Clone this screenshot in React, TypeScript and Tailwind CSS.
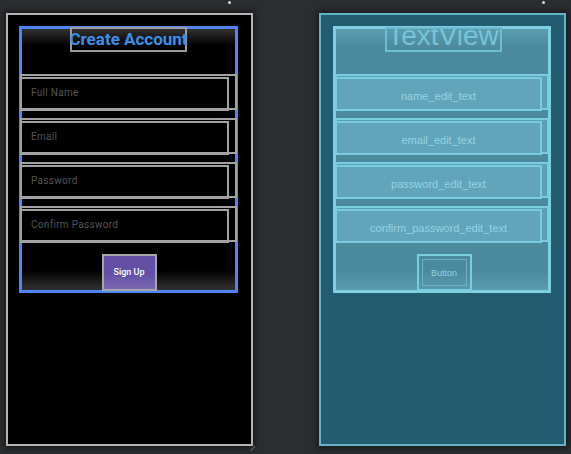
import React from 'react';

const fields = ['Full Name', 'Email', 'Password', 'Confirm Password'];
const ids = ['name_edit_text', 'email_edit_text', 'password_edit_text', 'confirm_password_edit_text'];

const DesignPhone = () => {
  return (
    <div className="w-[247px] h-[433px] border-2 border-[#b4b4b4] bg-black shadow-[0_0_6px_2px_rgba(0,0,0,0.45)] pl-[11px] pt-[11px]">
      <div className="relative w-[219px] h-[267px] bg-[linear-gradient(to_bottom,#3a3a3a_0px,#000_20px,#000_244px,#3a3a3a_100%)]">
        {/* selection outline */}
        <div className="absolute inset-0 border-[3px] border-[#4f86f7]"></div>

        <div className="relative flex flex-col items-stretch px-px pt-px">
          <div className="self-center w-[117px] h-[25px] border-2 border-[#9c9c9c] flex items-center justify-center">
            <span className="text-[17px] leading-none font-bold text-[#3d8ee6] font-['Roboto',sans-serif] whitespace-nowrap">
              Create Account
            </span>
          </div>

          <div className="mt-[22px] flex flex-col gap-[7px]">
            {fields.map((f) => (
              <div key={f} className="relative h-[37px] w-[217px]">
                <div className="absolute left-0 top-0 w-[217px] h-[36px] border-2 border-[#a3a3a3]"></div>
                <div className="absolute left-0 top-[3px] w-[209px] h-[34px] border-2 border-[#a3a3a3] flex items-center pl-[9px] pb-[3px]">
                  <span className="text-[10px] text-[#555] font-['Roboto',sans-serif] tracking-[0.3px]">{f}</span>
                </div>
              </div>
            ))}
          </div>

          <div className="self-center ml-[1px] mt-[11px] w-[55px] h-[37px] border-2 border-[#a6a6a6] bg-[linear-gradient(to_bottom,#6350a6_0%,#6350a6_55%,#7a68b0_100%)] flex items-center justify-center">
            <span className="text-[9px] font-medium text-white font-['Roboto',sans-serif]">Sign Up</span>
          </div>
        </div>
      </div>
    </div>
  );
};

const BlueprintPhone = () => {
  return (
    <div className="w-[247px] h-[433px] border-2 border-[#63b4c9] bg-[#235c6e] shadow-[0_0_6px_2px_rgba(0,0,0,0.45)] pl-[12px] pt-[11px]">
      <div className="relative w-[218px] h-[267px] bg-[linear-gradient(to_bottom,#5d9fb1_0px,#4b8a9c_22px,#4b8a9c_244px,#5c9db0_100%)]">
        <div className="absolute inset-0 border-[3px] border-[#7fcfe2]"></div>

        <div className="relative flex flex-col items-stretch pl-[2px] pt-px">
          <div className="self-center w-[117px] h-[25px] border-2 border-[#6fbdd2] overflow-hidden flex justify-center">
            <span className="mt-[-7px] text-[28px] leading-[28px] text-[#78c3d7] font-['Liberation_Sans',Arial,sans-serif] whitespace-nowrap">
              TextView
            </span>
          </div>

          <div className="mt-[22px] flex flex-col gap-[7px]">
            {ids.map((f) => (
              <div key={f} className="relative h-[37px] w-[214px]">
                <div className="absolute left-0 top-0 w-[214px] h-[36px] border-2 border-[#7accdf] bg-[#5c9fb3]"></div>
                <div className="absolute left-0 top-[3px] w-[207px] h-[34px] border-2 border-[#7accdf] bg-[#62a5ba] flex items-center justify-center pt-[4px]">
                  <span className="text-[11px] text-[#93d2e3] font-['Liberation_Sans',Arial,sans-serif]">{f}</span>
                </div>
              </div>
            ))}
          </div>

          <div className="self-center ml-[2px] mt-[11px] w-[55px] h-[37px] border-2 border-[#7accdf] p-[3px]">
            <div className="w-full h-full border border-[#6bb2c5] flex items-center justify-center pt-[2px]">
              <span className="text-[9px] text-[#93d2e3] font-['Liberation_Sans',Arial,sans-serif]">Button</span>
            </div>
          </div>
        </div>
      </div>
    </div>
  );
};

export default function App() {
  return (
    <div className="relative w-[571px] h-[454px] overflow-hidden bg-[#2b2d30]">
      {/* handle dots */}
      <div className="absolute left-[228px] top-[1px] w-[3px] h-[3px] rounded-full bg-[#d8d8d8]"></div>
      <div className="absolute left-[542px] top-[1px] w-[3px] h-[3px] rounded-full bg-[#d8d8d8]"></div>
      <div className="absolute left-[250px] top-[448px] w-[6px] h-px bg-[#6a6a6a] -rotate-45"></div>

      <div className="flex gap-[66px] pl-[6px] pt-[13px]">
        <DesignPhone />
        <BlueprintPhone />
      </div>
    </div>
  );
}
